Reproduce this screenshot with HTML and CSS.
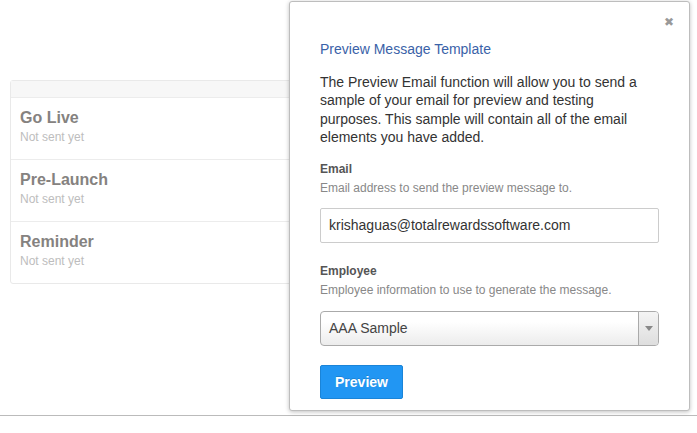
FILE: index.html
```html
<!DOCTYPE html>
<html>
<head>
<meta charset="utf-8">
<link rel="stylesheet" href="styles.css">
</head>
<body>
<div class="page">
  <div class="card">
    <div class="card-head"></div>
    <div class="row">
      <div class="row-title">Go Live</div>
      <div class="row-sub">Not sent yet</div>
    </div>
    <div class="row">
      <div class="row-title">Pre-Launch</div>
      <div class="row-sub">Not sent yet</div>
    </div>
    <div class="row">
      <div class="row-title">Reminder</div>
      <div class="row-sub">Not sent yet</div>
    </div>
  </div>
  <div class="footer"></div>
</div>

<div class="modal">
  <div class="close">&#x2716;</div>
  <div class="modal-title">Preview Message Template</div>
  <p class="intro">The Preview Email function will allow you to send a sample of your email for preview and testing purposes. This sample will contain all of the email elements you have added.</p>
  <div class="field">
    <div class="label">Email</div>
    <div class="help">Email address to send the preview message to.</div>
    <div class="input">krishaguas@totalrewardssoftware.com</div>
  </div>
  <div class="field field-2">
    <div class="label">Employee</div>
    <div class="help">Employee information to use to generate the message.</div>
    <div class="select">
      <span class="select-text">AAA Sample</span>
      <span class="select-arrow"><span class="tri"></span></span>
    </div>
  </div>
  <div class="btn">Preview</div>
</div>
</body>
</html>
```

FILE: styles.css
```css
html, body {
  margin: 0;
  padding: 0;
  background: #fff;
  font-family: "Liberation Sans", Arial, sans-serif;
}
.page {
  width: 697px;
  height: 433px;
  padding-top: 80px;
  box-sizing: border-box;
}
.card {
  margin-left: 10px;
  width: 590px;
  border: 1px solid #e9e9e9;
  border-radius: 3px;
  box-sizing: border-box;
}
.card-head {
  height: 16px;
  background: #f7f7f7;
  border-bottom: 1px solid #ececec;
}
.row {
  padding: 10px 9px 16px;
  border-bottom: 1px solid #ececec;
  height: 62px;
  box-sizing: border-box;
}
.row:last-child {
  border-bottom: none;
  height: 61px;
}
.row-title {
  font-size: 16px;
  font-weight: bold;
  line-height: 20px;
  color: #858280;
  margin-bottom: 2px;
}
.row-sub {
  font-size: 12px;
  line-height: 14px;
  color: #bdbdbd;
}
.footer {
  margin-top: 131px;
  border-top: 1px solid #bbb;
}
.modal {
  position: absolute;
  left: 289px;
  top: 1px;
  width: 401px;
  height: 410px;
  box-sizing: border-box;
  background: #fff;
  border: 1px solid #bdbdbd;
  border-radius: 3px;
  box-shadow: 0 1px 4px rgba(0,0,0,0.25);
  padding: 38px 30px 0 30px;
}
.close {
  position: absolute;
  right: 15px;
  top: 12px;
  font-size: 12px;
  color: #999;
  line-height: 16px;
}
.modal-title {
  font-size: 14px;
  line-height: 18px;
  color: #3a62a8;
}
.intro {
  margin: 15px 0 0;
  font-size: 14px;
  line-height: 18.3px;
  color: #333;
}
.field {
  margin-top: 15px;
}
.field-2 {
  margin-top: 20px;
}
.label {
  font-size: 12px;
  font-weight: bold;
  line-height: 16px;
  color: #555;
}
.help {
  margin-top: 3px;
  font-size: 12px;
  line-height: 16px;
  color: #888;
}
.input {
  margin-top: 12px;
  height: 35px;
  box-sizing: border-box;
  border: 1px solid #ccc;
  border-radius: 2px;
  padding: 0 8px;
  font-size: 14px;
  line-height: 33px;
  color: #333;
}
.select {
  margin-top: 13px;
  height: 35px;
  box-sizing: border-box;
  border: 1px solid #aaa;
  border-radius: 4px;
  background: linear-gradient(#fff 0%, #fff 30%, #ececec 100%);
  display: flex;
  align-items: stretch;
}
.select-text {
  flex: 1;
  padding: 0 8px;
  font-size: 14px;
  line-height: 33px;
  color: #444;
}
.select-arrow {
  width: 19px;
  border-left: 1px solid #aaa;
  display: flex;
  align-items: center;
  justify-content: center;
  background: linear-gradient(#f4f4f4, #dedede);
  border-radius: 0 3px 3px 0;
}
.tri {
  width: 0;
  height: 0;
  border-left: 4px solid transparent;
  border-right: 4px solid transparent;
  border-top: 5px solid #888;
}
.btn {
  margin-top: 19px;
  width: 83px;
  height: 34px;
  box-sizing: border-box;
  background: #2196f3;
  border: 1px solid #1a84d8;
  border-radius: 2px;
  color: #fff;
  font-size: 14px;
  font-weight: bold;
  line-height: 32px;
  text-align: center;
  text-shadow: 0 -1px 0 rgba(0,0,0,0.15);
}
```
